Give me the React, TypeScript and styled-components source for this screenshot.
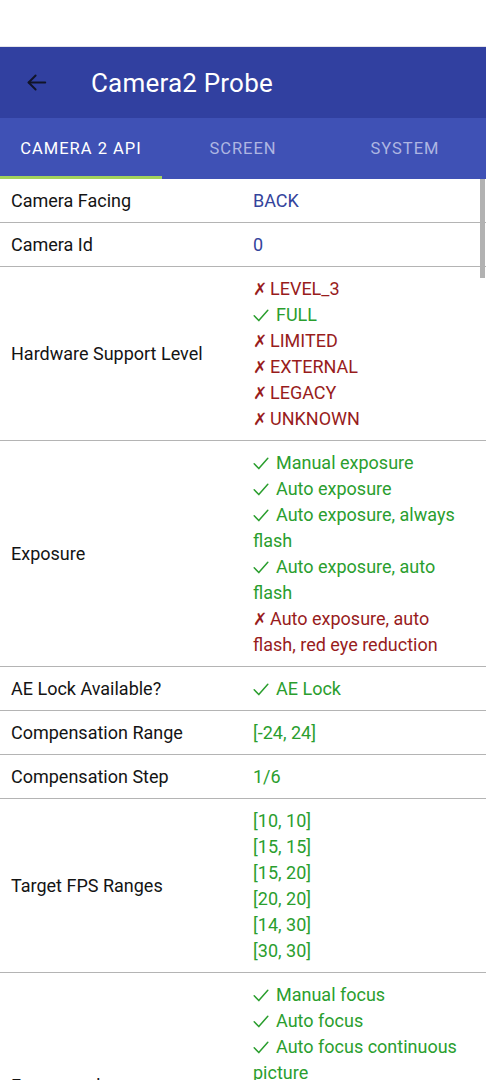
import React from "react";
import styled, { createGlobalStyle } from "styled-components";

type Item = { ok: boolean; text: string };

interface Row {
    label: string;
    plain?: string;
    items?: Item[];
    values?: string[];
}

const GlobalStyle = createGlobalStyle`
    html, body {
        margin: 0;
        padding: 0;
        background: #ffffff;
    }
    body {
        font-family: Roboto, "Noto Sans", "Liberation Sans", sans-serif;
        overflow: hidden;
    }
`;

const Screen = styled.div`
    width: 486px;
    height: 1080px;
    overflow: hidden;
    position: relative;
    background: #ffffff;
`;

const StatusBar = styled.div`
    height: 46px;
    background: #ffffff;
    border-bottom: 1px solid #e4e4ea;
`;

const AppBar = styled.header`
    height: 71px;
    background: #3140a0;
    display: flex;
    align-items: center;
    padding-left: 26px;
    gap: 44px;
`;

const BackIcon = styled.svg`
    width: 21px;
    height: 21px;
    flex-shrink: 0;
`;

const Title = styled.h1`
    margin: 0;
    color: #ffffff;
    font-size: 26px;
    font-weight: 400;
    letter-spacing: 0.2px;
`;

const TabBar = styled.nav`
    height: 61px;
    background: #3f51b5;
    display: grid;
    grid-template-columns: repeat(3, 1fr);
`;

const Tab = styled.div<{ $active?: boolean }>`
    display: flex;
    align-items: center;
    justify-content: center;
    padding-top: 2px;
    font-size: 16.5px;
    letter-spacing: 1px;
    color: ${(p) => (p.$active ? "#ffffff" : "#aeb6e2")};
    border-bottom: 3px solid ${(p) => (p.$active ? "#a2d35c" : "transparent")};
`;

const List = styled.div`
    display: flex;
    flex-direction: column;
`;

const RowBox = styled.div`
    display: grid;
    grid-template-columns: 242px 1fr;
    align-items: center;
    padding: 9px 18px 8px 11px;
    border-bottom: 1px solid #b4b4b4;
    font-size: 18px;
    line-height: 26px;
`;

const Label = styled.div`
    color: #141414;
`;

const Values = styled.div`
    display: flex;
    flex-direction: column;
`;

const Value = styled.div<{ $tone: "blue" | "green" | "red" }>`
    color: ${(p) =>
        p.$tone === "blue" ? "#34449c" : p.$tone === "green" ? "#2a9e2e" : "#981c1c"};
`;

const CheckMark = styled.svg`
    width: 16px;
    height: 13px;
    margin-right: 7px;
    vertical-align: -1px;
`;

const CrossMark = styled.span`
    display: inline-block;
    width: 17px;
    font-family: "DejaVu Sans", sans-serif;
    font-size: 17px;
    line-height: 0;
`;

const ScrollThumb = styled.div`
    position: absolute;
    right: 1px;
    top: 179px;
    width: 5px;
    height: 99px;
    background: #b2b2b2;
`;

const ok = (text: string): Item => ({ ok: true, text });
const no = (text: string): Item => ({ ok: false, text });

const rows: Row[] = [
    { label: "Camera Facing", plain: "BACK" },
    { label: "Camera Id", plain: "0" },
    {
        label: "Hardware Support Level",
        items: [no("LEVEL_3"), ok("FULL"), no("LIMITED"), no("EXTERNAL"), no("LEGACY"), no("UNKNOWN")],
    },
    {
        label: "Exposure",
        items: [
            ok("Manual exposure"),
            ok("Auto exposure"),
            ok("Auto exposure, always flash"),
            ok("Auto exposure, auto flash"),
            no("Auto exposure, auto flash, red eye reduction"),
        ],
    },
    { label: "AE Lock Available?", items: [ok("AE Lock")] },
    { label: "Compensation Range", values: ["[-24, 24]"] },
    { label: "Compensation Step", values: ["1/6"] },
    {
        label: "Target FPS Ranges",
        values: ["[10, 10]", "[15, 15]", "[15, 20]", "[20, 20]", "[14, 30]", "[30, 30]"],
    },
    {
        label: "Focus modes",
        items: [
            ok("Manual focus"),
            ok("Auto focus"),
            ok("Auto focus continuous picture"),
            ok("Auto focus continuous video"),
            no("Auto focus EDOF"),
            ok("Auto focus macro"),
        ],
    },
];

function Status({ ok }: { ok: boolean }) {
    if (ok) {
        return (
            <CheckMark viewBox="0 0 16 13" fill="none" stroke="currentColor" strokeWidth="1.5" strokeLinecap="round" strokeLinejoin="round">
                <path d="M1.2 6.8l4.6 4.8L14.8 1.2" />
            </CheckMark>
        );
    }
    return <CrossMark>✗</CrossMark>;
}

function InfoRow({ row }: { row: Row }) {
    return (
        <RowBox>
            <Label>{row.label}</Label>
            <Values>
                {row.plain && <Value $tone="blue">{row.plain}</Value>}
                {row.values?.map((v) => (
                    <Value key={v} $tone="green">
                        {v}
                    </Value>
                ))}
                {row.items?.map((it) => (
                    <Value key={it.text} $tone={it.ok ? "green" : "red"}>
                        <Status ok={it.ok} />
                        {it.text}
                    </Value>
                ))}
            </Values>
        </RowBox>
    );
}

export default function App() {
    return (
        <Screen>
            <GlobalStyle />
            <StatusBar />
            <AppBar>
                <BackIcon viewBox="0 0 24 24" fill="none" stroke="#111428" strokeWidth="2.2" strokeLinecap="round" strokeLinejoin="round">
                    <path d="M22 12H3" />
                    <path d="M11 4L3 12l8 8" />
                </BackIcon>
                <Title>Camera2 Probe</Title>
            </AppBar>
            <TabBar>
                <Tab $active>CAMERA 2 API</Tab>
                <Tab>SCREEN</Tab>
                <Tab>SYSTEM</Tab>
            </TabBar>
            <List>
                {rows.map((r) => (
                    <InfoRow key={r.label} row={r} />
                ))}
            </List>
            <ScrollThumb />
        </Screen>
    );
}
